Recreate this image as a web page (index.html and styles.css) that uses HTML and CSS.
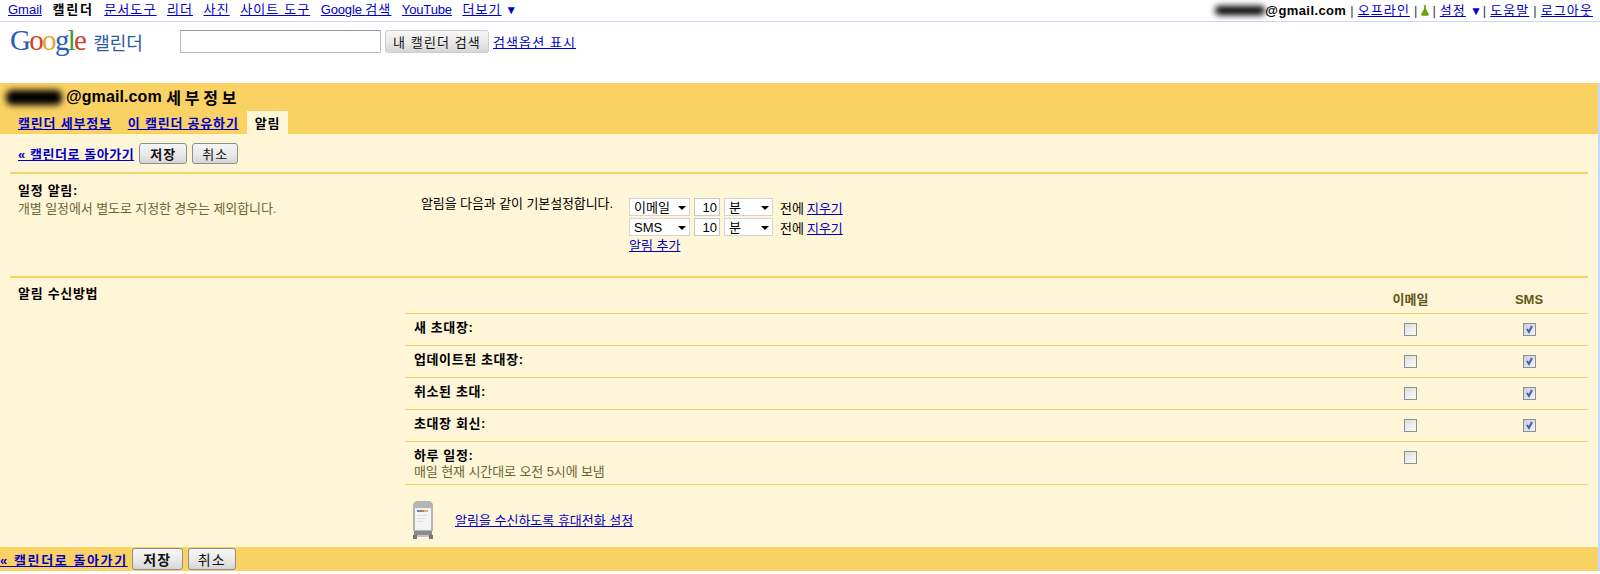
FILE: index.html
```html
<!DOCTYPE html>
<html lang="ko">
<head>
  <meta charset="UTF-8" />
  <title>Google 캘린더</title>
  <link rel="stylesheet" href="styles.css">
</head>
<body>
  <div class="topbar">
    <nav class="apps">
      <a href="#">Gmail</a>
      <b class="ko current">캘린더</b>
      <a class="ko" href="#">문서도구</a>
      <a class="ko" href="#">리더</a>
      <a class="ko" href="#">사진</a>
      <a class="ko" href="#">사이트 도구</a>
      <a class="latin" href="#">Google <span class="ko">검색</span></a>
      <a class="latin" href="#">YouTube</a>
      <span><a class="ko" href="#">더보기</a> <span class="arrow">▼</span></span>
    </nav>
    <div class="account">
      <span class="blot blot-small"></span><b class="mail">@gmail.com</b>
      <i>|</i> <a class="ko" href="#">오프라인</a>
      <i>|</i>
      <svg class="flask" width="8" height="11" viewBox="0 0 9 12"><path d="M3 0h3v1h-.5v3L9 10.500 8 12H1l-1-1.500L3.500 4V1H3z" fill="#6f9e10"/></svg>
      <i>|</i> <a class="ko" href="#">설정</a> <span class="arrow arrow-tight">▼</span>
      <i>|</i> <a class="ko" href="#">도움말</a>
      <i>|</i> <a class="ko" href="#">로그아웃</a>
    </div>
  </div>

  <header class="masthead">
    <div class="logo">
      <span class="google"><span class="c-blue">G</span><span class="c-red">o</span><span class="c-yellow">o</span><span class="c-blue">g</span><span class="c-green">l</span><span class="c-red">e</span></span>
      <span class="logo-name">캘린더</span>
    </div>
    <form class="search">
      <input class="search-box" type="text" />
      <button class="btn search-btn ko" type="button">내 캘린더 검색</button>
      <a class="ko" href="#">검색옵션 표시</a>
    </form>
  </header>

  <div class="panel">
    <div class="panel-head">
      <h1><span class="blot blot-big"></span>@gmail.com <span class="ko-title">세부정보</span></h1>
      <div class="tabs">
        <a class="tab" href="#">캘린더 세부정보</a>
        <a class="tab" href="#">이 캘린더 공유하기</a>
        <span class="tab tab-on">알림</span>
      </div>
    </div>

    <div class="panel-body">
      <div class="actions">
        <a class="back" href="#">« 캘린더로 돌아가기</a>
        <button class="btn btn-save ko" type="button">저장</button>
        <button class="btn btn-cancel ko" type="button">취소</button>
      </div>

      <section class="block block-event">
        <div class="block-side">
          <div class="block-title">일정 알림:</div>
          <div class="note">개별 일정에서 별도로 지정한 경우는 제외합니다.</div>
        </div>
        <div class="defaults">
          <div class="defaults-label">알림을 다음과 같이 기본설정합니다.</div>
          <div class="reminders">
            <div class="reminder">
              <span class="pick pick-how"><select><option>이메일</option></select></span>
              <input class="mins" type="text" value="10" />
              <span class="pick pick-unit"><select><option>분</option></select></span>
              <span class="before">전에</span>
              <a href="#">지우기</a>
            </div>
            <div class="reminder">
              <span class="pick pick-how"><select><option>SMS</option></select></span>
              <input class="mins" type="text" value="10" />
              <span class="pick pick-unit"><select><option>분</option></select></span>
              <span class="before">전에</span>
              <a href="#">지우기</a>
            </div>
            <a class="add-link" href="#">알림 추가</a>
          </div>
        </div>
      </section>

      <section class="block block-delivery">
        <div class="block-side">
          <div class="block-title">알림 수신방법</div>
        </div>
        <div class="delivery">
          <div class="row row-head">
            <div></div>
            <div class="col">이메일</div>
            <div class="col">SMS</div>
          </div>
          <div class="row">
            <div class="row-name">새 초대장:</div>
            <div class="col"><input type="checkbox" /></div>
            <div class="col"><input type="checkbox" checked /></div>
          </div>
          <div class="row">
            <div class="row-name">업데이트된 초대장:</div>
            <div class="col"><input type="checkbox" /></div>
            <div class="col"><input type="checkbox" checked /></div>
          </div>
          <div class="row">
            <div class="row-name">취소된 초대:</div>
            <div class="col"><input type="checkbox" /></div>
            <div class="col"><input type="checkbox" checked /></div>
          </div>
          <div class="row">
            <div class="row-name">초대장 회신:</div>
            <div class="col"><input type="checkbox" /></div>
            <div class="col"><input type="checkbox" checked /></div>
          </div>
          <div class="row row-tall">
            <div>
              <div class="row-name">하루 일정:</div>
              <div class="note">매일 현재 시간대로 오전 5시에 보냄</div>
            </div>
            <div class="col"><input type="checkbox" /></div>
            <div class="col"></div>
          </div>
          <div class="phone-row">
            <svg class="phone" width="20" height="38" viewBox="0 0 20 38">
              <path d="M3 0h14l3 3v27H0V3z" fill="#b4b4b4"/>
              <rect x="2" y="7" width="16" height="22" fill="#f4f4f4"/>
              <rect x="4" y="9" width="4" height="2" fill="#5a86c8"/>
              <rect x="8" y="9" width="3" height="2" fill="#d8705c"/>
              <rect x="11" y="9" width="4" height="2" fill="#d8b85c"/>
              <path d="M4 14h10v1H4zM4 17h8v1H4zM4 20h6v1H4z" fill="#d8dde6"/>
              <rect x="1" y="30" width="18" height="4" fill="#8a8a8a"/>
              <path d="M0 34h4v4H0zM16 34h4v4h-4z" fill="#777"/>
              <rect x="4" y="34" width="12" height="2" fill="#c4c4c4"/>
            </svg>
            <a href="#">알림을 수신하도록 휴대전화 설정</a>
          </div>
        </div>
      </section>
    </div>

    <div class="panel-foot">
      <a class="back" href="#">« 캘린더로 돌아가기</a>
      <button class="btn btn-save ko" type="button">저장</button>
      <button class="btn btn-cancel ko" type="button">취소</button>
    </div>
  </div>
</body>
</html>
```

FILE: styles.css
```css
body {
  margin: 0;
  background: #fff;
  color: #000;
  font-family: "Liberation Sans", "Noto Sans CJK KR", sans-serif;
  font-size: 13px;
  overflow: hidden;
}

a {
  color: #0000cc;
}

.ko {
  letter-spacing: 1.1px;
}

/* top bar */
.topbar {
  display: flex;
  justify-content: space-between;
  height: 21px;
  line-height: 20px;
  border-bottom: 1px solid #c9d7f1;
  white-space: nowrap;
}

.apps {
  display: flex;
  gap: 10.500px;
  padding-left: 8px;
}

.current {
  letter-spacing: 1.800px;
}

.latin {
  letter-spacing: -0.150px;
}

.arrow {
  color: #0000cc;
  font-size: 12px;
}

.arrow-tight {
  margin-right: -3px;
}

.account {
  display: flex;
  align-items: center;
  gap: 4px;
  padding-right: 7px;
}

.account i {
  font-style: normal;
  color: #334;
}

.mail {
  margin-left: -4px;
  letter-spacing: 0.400px;
}

.flask {
  margin-right: -1px;
}

.blot {
  display: inline-block;
  background: #000;
  filter: blur(3px);
  border-radius: 6px;
}

.blot-small {
  width: 50px;
  height: 9px;
}

.blot-big {
  width: 56px;
  height: 15px;
  margin: 0 4px 0 6px;
  vertical-align: -4px;
}

/* logo and search */
.masthead {
  display: flex;
  height: 61px;
}

.logo {
  display: flex;
  align-items: baseline;
  width: 170px;
  padding: 0 0 0 10px;
  height: 38px;
  margin-top: 1px;
}

.google {
  font-family: "Liberation Serif", serif;
  font-size: 29px;
  letter-spacing: -1.700px;
  line-height: 34px;
}

.c-blue { color: #2a5cb8; }
.c-red { color: #d23f2c; }
.c-yellow { color: #e3a81c; }
.c-green { color: #3f9a3c; }

.logo-name {
  margin-left: 8px;
  color: #2b5aa8;
  font-size: 18px;
  line-height: 34px;
}

.search {
  display: flex;
  align-items: center;
  gap: 4px;
  height: 23px;
  margin-top: 8px;
}

.search-box {
  box-sizing: border-box;
  width: 201px;
  height: 23px;
  margin: 0;
  border: 1px solid #bbb;
  border-top-color: #999;
}

.btn {
  box-sizing: border-box;
  height: 21px;
  padding: 0;
  border: 1px solid #8e8e8e;
  border-radius: 3px;
  background: linear-gradient(#f6f6f6, #e9e9e9 55%, #d6d6d6);
  color: #111;
  font-family: inherit;
  font-size: 13px;
}

.search-btn {
  width: 104px;
  height: 23px;
  border-color: #ccc;
}

/* yellow panel */
.panel {
  width: 1598px;
  border-right: 2px solid #c3d9ff;
}

.panel-head {
  height: 51px;
  background: #fad163;
}

.panel-head h1 {
  display: flex;
  align-items: center;
  height: 28px;
  margin: 0;
  font-size: 16px;
  letter-spacing: 0.100px;
  white-space: pre;
}

.ko-title {
  letter-spacing: 3.800px;
}

.tabs {
  display: flex;
  height: 23px;
  padding-left: 10px;
}

.tab {
  padding: 3px 8px 0;
  line-height: 20px;
  font-weight: bold;
  letter-spacing: 0.800px;
}

.tab-on {
  background: #fff5d7;
}

.panel-body {
  background: #fff5d7;
  height: 413px;
  padding: 0 10px;
}

.actions {
  display: flex;
  align-items: center;
  gap: 5px;
  height: 38px;
  padding-left: 8px;
}

.back {
  font-weight: bold;
  letter-spacing: 0.550px;
  white-space: nowrap;
}

.btn-save {
  width: 48px;
  font-weight: bold;
}

.btn-cancel {
  width: 46px;
}

/* settings blocks */
.block {
  display: grid;
  grid-template-columns: 395px 1fr;
  border-top: 2px solid #fad163;
}

.block-event {
  height: 102px;
}

.block-side {
  padding: 7px 0 0 8px;
}

.block-event .block-side {
  padding-top: 8px;
}

.block-title {
  font-weight: bold;
  letter-spacing: 0.700px;
  line-height: 18px;
}

.note {
  color: #6b6535;
  letter-spacing: -0.100px;
  line-height: 18px;
}

.defaults {
  display: flex;
  padding: 24px 0 0 16px;
}

.defaults-label {
  width: 208px;
  margin-top: -3px;
  letter-spacing: -0.100px;
  line-height: 18px;
  white-space: nowrap;
}

.reminders {
  display: flex;
  flex-direction: column;
  gap: 2px;
}

.reminder {
  display: flex;
  align-items: center;
  gap: 4px;
  height: 18px;
}

.add-link {
  line-height: 15px;
}

.pick {
  position: relative;
  display: block;
  height: 18px;
}

.pick::after {
  content: "";
  position: absolute;
  right: 4px;
  top: 8px;
  border: 4px solid transparent;
  border-top-color: #000;
  border-bottom-width: 0;
}

.pick select {
  box-sizing: border-box;
  appearance: none;
  width: 100%;
  height: 18px;
  padding: 0 0 0 4px;
  border: 1px solid #d4d4d4;
  border-radius: 0;
  background: #fff;
  font-family: inherit;
  font-size: 13px;
}

.pick-how {
  width: 61px;
}

.pick-unit {
  width: 49px;
}

.mins {
  box-sizing: border-box;
  width: 26px;
  height: 18px;
  margin: 0;
  padding: 0 2px 0 0;
  border: 1px solid #c8c8c8;
  font-family: inherit;
  font-size: 13px;
  text-align: right;
}

.before {
  margin: 0 -1px 0 3px;
}

.delivery {
  display: flex;
  flex-direction: column;
}

.row {
  display: grid;
  grid-template-columns: 1fr 119px 118px;
  box-sizing: border-box;
  height: 32px;
  padding-top: 6px;
  border-top: 1px solid #fad163;
}

.row-head {
  height: 35px;
  padding-top: 14px;
  border-top: 0;
  color: #5e5820;
  font-weight: bold;
  line-height: 16px;
}

.row-tall {
  height: 44px;
  border-bottom: 1px solid #fad163;
}

.row-name {
  padding-left: 9px;
  font-weight: bold;
  letter-spacing: 0.600px;
  line-height: 16px;
}

.row-tall .note {
  padding-left: 9px;
  line-height: 16px;
}

.col {
  text-align: center;
}

.col input {
  appearance: none;
  display: block;
  box-sizing: border-box;
  width: 13px;
  height: 13px;
  margin: 3px auto 0;
  border: 1px solid #8f8f8f;
  background: linear-gradient(135deg, #dcdcdc, #fbfbfb);
}

.col input:checked {
  background: url("data:image/svg+xml,%3Csvg xmlns='http://www.w3.org/2000/svg' width='11' height='11'%3E%3Cpath d='M3 5l2 3 3-6' fill='none' stroke='%23445fa8' stroke-width='2'/%3E%3C/svg%3E") center no-repeat, linear-gradient(135deg, #c8cde0, #f2f3f8);
}

.phone-row {
  display: flex;
  align-items: center;
  gap: 22px;
  height: 61px;
  padding: 8px 0 0 8px;
  box-sizing: border-box;
}

.panel-foot {
  display: flex;
  align-items: center;
  gap: 5px;
  height: 24px;
  background: #fad163;
}

.panel-foot .back {
  margin-right: -1px;
  letter-spacing: 1.600px;
}

.panel-foot .btn {
  height: 22px;
  font-size: 14px;
}

.panel-foot .btn-save {
  width: 51px;
}

.panel-foot .btn-cancel {
  width: 48px;
}
```
